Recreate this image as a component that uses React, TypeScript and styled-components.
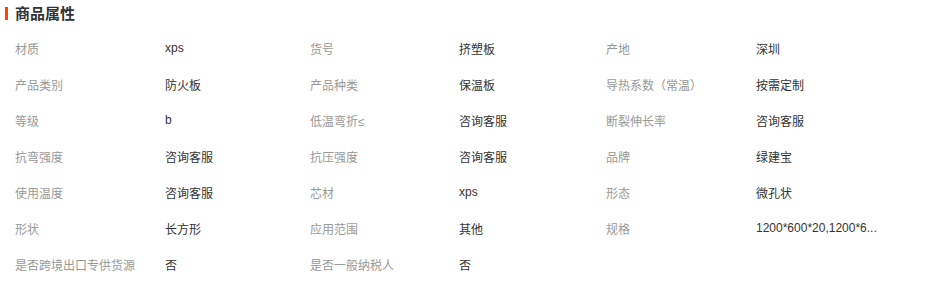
import React from 'react'
import styled, { createGlobalStyle } from 'styled-components'

const GlobalStyle = createGlobalStyle`
  html, body {
    margin: 0;
    padding: 0;
    background: #fff;
  }
  body {
    font-family: 'Liberation Sans', 'Noto Sans CJK SC', sans-serif;
    font-size: 12px;
    color: #333;
  }
`

const attrs: [string, string][] = [
  ['材质', 'xps'],
  ['货号', '挤塑板'],
  ['产地', '深圳'],
  ['产品类别', '防火板'],
  ['产品种类', '保温板'],
  ['导热系数（常温）', '按需定制'],
  ['等级', 'b'],
  ['低温弯折≤', '咨询客服'],
  ['断裂伸长率', '咨询客服'],
  ['抗弯强度', '咨询客服'],
  ['抗压强度', '咨询客服'],
  ['品牌', '绿建宝'],
  ['使用温度', '咨询客服'],
  ['芯材', 'xps'],
  ['形态', '微孔状'],
  ['形状', '长方形'],
  ['应用范围', '其他'],
  ['规格', '1200*600*20,1200*6...'],
  ['是否跨境出口专供货源', '否'],
  ['是否一般纳税人', '否']
]

const Wrapper = styled.section`
  width: 935px;
  padding: 0 0 0 15px;
  box-sizing: border-box;
`

const Title = styled.h3`
  position: relative;
  margin: 0;
  height: 30px;
  line-height: 28px;
  font-size: 15px;
  font-weight: bold;
  color: #333;

  &::before {
    content: '';
    position: absolute;
    left: -10px;
    top: 7px;
    width: 3px;
    height: 13px;
    background: #ff4400;
  }
`

const Grid = styled.dl`
  margin: 0;
  display: grid;
  grid-template-columns: 150px 145px 149px 147px 150px 1fr;
  grid-auto-rows: 36px;
  align-items: center;
`

const Label = styled.dt`
  color: #999;
  white-space: nowrap;
`

const Value = styled.dd`
  margin: 0;
  color: #333;
  white-space: nowrap;
`

export default function App() {
  return (
    <>
      <GlobalStyle />
      <Wrapper>
        <Title>商品属性</Title>
        <Grid>
          {attrs.map(([label, value]) => (
            <React.Fragment key={label}>
              <Label>{label}</Label>
              <Value>{value}</Value>
            </React.Fragment>
          ))}
        </Grid>
      </Wrapper>
    </>
  )
}
